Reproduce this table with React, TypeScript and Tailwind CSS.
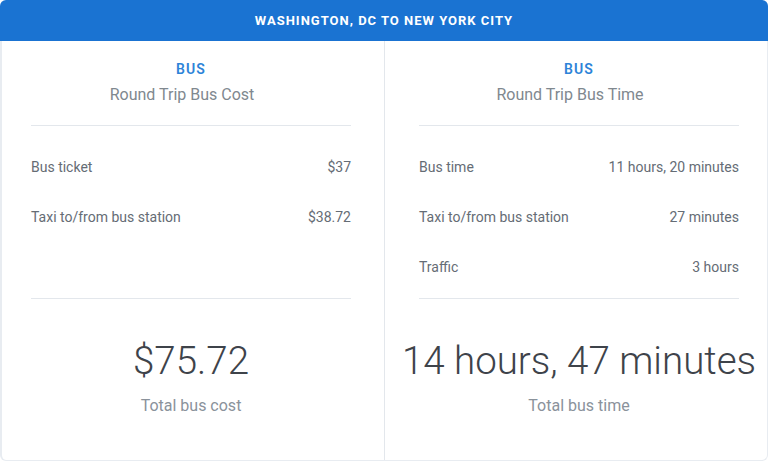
import React from "react";

// Data for the two comparison columns
const columns = [
  {
    tag: "BUS",
    title: "Round Trip Bus Cost",
    rows: [
      { label: "Bus ticket", value: "$37" },
      { label: "Taxi to/from bus station", value: "$38.72" },
    ],
    total: "$75.72",
    totalLabel: "Total bus cost",
    box: "w-[382px] pl-[29px] pr-[33px]",
  },
  {
    tag: "BUS",
    title: "Round Trip Bus Time",
    rows: [
      { label: "Bus time", value: "11 hours, 20 minutes" },
      { label: "Taxi to/from bus station", value: "27 minutes" },
      { label: "Traffic", value: "3 hours" },
    ],
    total: "14 hours, 47 minutes",
    totalLabel: "Total bus time",
    box: "w-[384px] pl-[34px] pr-[29px] border-l border-[#e3e7ec]",
  },
];

type Col = (typeof columns)[number];

const Column: React.FC<{ col: Col }> = ({ col }) => {
  return (
    <div className={`shrink-0 flex flex-col pt-[20px] ${col.box}`}>
      <div className="text-center">
        <p className="text-[14px] leading-[16px] font-semibold tracking-[1.2px] text-[#2d83d8]">{col.tag}</p>
        <p className="mt-[8px] pr-[18px] text-[16px] leading-[20px] text-[#80888f]">{col.title}</p>
      </div>
      <div className="mt-[20px] border-t border-[#e3e7ec] h-[173px] pt-[16px]">
        {col.rows.map((r) => (
          <div key={r.label} className="h-[50px] flex items-center justify-between text-[14px] text-[#656c75]">
            <span>{r.label}</span>
            <span>{r.value}</span>
          </div>
        ))}
      </div>
      <div className="border-t border-[#e3e7ec] flex flex-col items-center">
        <p className="mt-[38px] text-[38.5px] leading-[48px] font-light text-[#3e434a] whitespace-nowrap">{col.total}</p>
        <p className="mt-[11px] text-[16px] leading-[20px] text-[#8a929b]">{col.totalLabel}</p>
      </div>
    </div>
  );
};

export default function App() {
  return (
    <div className="w-[769px] h-[462px] bg-white font-['Roboto',sans-serif]">
      <div className="w-[768px]">
        <div className="h-[41px] bg-[#1a73d2] rounded-t-[6px] flex items-center justify-center">
          <p className="text-white text-[13px] font-bold tracking-[1px]">WASHINGTON, DC TO NEW YORK CITY</p>
        </div>
        <div className="h-[420px] flex border-l-2 border-r border-b border-[#e8ecf1] rounded-b-[6px]">
          {columns.map((c) => (
            <Column key={c.title} col={c} />
          ))}
        </div>
      </div>
    </div>
  );
}
